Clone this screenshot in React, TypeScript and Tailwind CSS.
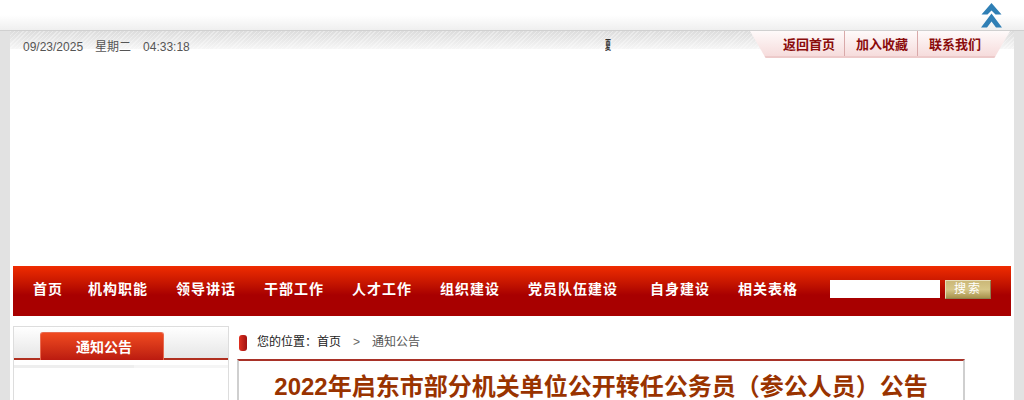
export default function App() {
  const cjk = { fontFamily: '"Liberation Sans","Noto Sans CJK SC",sans-serif' };
  const nav = [
    ["首页", "mr-[25px]"],
    ["机构职能", "mr-[28px]"],
    ["领导讲话", "mr-[28px]"],
    ["干部工作", "mr-[28px]"],
    ["人才工作", "mr-[28px]"],
    ["组织建设", "mr-[28px]"],
    ["党员队伍建设", "mr-[32px]"],
    ["自身建设", "mr-[28px]"],
    ["相关表格", "mr-[32px]"],
  ];
  return (
    <div style={cjk} className="relative h-[400px] w-[1024px] overflow-hidden bg-[#e2e2e2]">
      <div className="h-[31px] border-b border-[#d0d0d0] bg-gradient-to-b from-white from-[50%] to-[#efefef]" />
      <svg className="absolute left-[980px] top-[3px]" width="23" height="25" viewBox="0 0 23 25">
        <path d="M11.5 0 L21.5 11.5 L15.5 11.5 L11.5 7.5 L7.5 11.5 L1.5 11.5 Z" fill="#2f7fb5" />
        <path d="M11.5 10.5 L22 24.5 L16 24.5 L11.5 18.5 L7 24.5 L1 24.5 Z" fill="#2f7fb5" />
      </svg>
      <div className="mx-[10px] h-[369px] bg-white">
        <div className="flex h-[235px] items-start bg-[repeating-linear-gradient(135deg,rgba(255,255,255,0.35)_0px,rgba(255,255,255,0.35)_1px,transparent_1px,transparent_3px),linear-gradient(#dcdcdc,#f6f6f6)] bg-[length:100%_18px] bg-no-repeat">
          <div className="flex h-[18px] items-center pt-[13px] pl-[13px] text-[12px] leading-[14px] text-[#555555]">
            <span className="mr-[12px]">09/23/2025</span>
            <span className="mr-[12px]">星期二</span>
            <span>04:33:18</span>
          </div>
          <div className="mt-[8px] ml-[415px] h-[14px] w-[6px] text-[12px] leading-[14px] font-bold text-[#333333]">
            <span className="block w-[12px] origin-left scale-x-50">夏</span>
          </div>
          <div className="mr-[4px] ml-auto flex h-[27px] w-[260px] items-center border-b-2 border-[#edcaca] bg-gradient-to-b from-[#fefafa] to-[#f6dcdc] pt-[2px] pl-[33px] text-[13px] font-bold text-[#8a0c0c] [clip-path:polygon(0_0,100%_0,94%_100%,6%_100%)]">
            <span className="w-[61px] whitespace-nowrap">返回首页</span>
            <span className="-mt-[2px] h-[25px] w-px bg-[#d9a9a9]" />
            <span className="ml-[11px] w-[61px] whitespace-nowrap">加入收藏</span>
            <span className="-mt-[2px] h-[25px] w-px bg-[#d9a9a9]" />
            <span className="ml-[11px] whitespace-nowrap">联系我们</span>
          </div>
        </div>
        <div className="mx-[3px] flex h-[50px] items-center bg-gradient-to-b from-[#f02c00] to-[#a80000] to-[58%] pb-[4px] pl-[20px] text-[14px] font-bold tracking-[1px] text-white">
          {nav.map(([t, c]) => (
            <span key={t} className={`whitespace-nowrap ${c}`}>{t}</span>
          ))}
          <div className="h-[18px] w-[110px] bg-white" />
          <div className="ml-[5px] flex h-[19px] w-[46px] items-center justify-center border border-t-[#e6dcb8] border-r-[#8f7f50] border-b-[#8f7f50] border-l-[#e6dcb8] bg-gradient-to-b from-[#cbb878] via-[#d6c688] to-[#a8924c] text-[12px] font-normal tracking-[2px] text-white">
            搜索
          </div>
        </div>
        <div className="flex px-[3px] pt-[10px]">
          <div className="w-[216px] shrink-0 border border-[#dddddd]">
            <div className="h-[33px] border-b-2 border-[#b03020] bg-gradient-to-b from-white to-[#e6e6e6] pt-[5px] pl-[26px]">
              <div className="flex h-[28px] w-[124px] items-center justify-center rounded-t-[3px] border border-b-0 border-[#e86a50] bg-gradient-to-b from-[#f04a20] to-[#bb1a10] pt-[1px] pl-[4px] text-[14px] font-bold text-white">
                通知公告
              </div>
            </div>
            <div className="mt-[5px] h-[3px] bg-[#f5f5f5]">
              <div className="h-[3px] w-[120px] bg-[#eeeeee]" />
            </div>
          </div>
          <div className="ml-[8px] w-[728px] shrink-0">
            <div className="flex h-[33px] items-center pb-[1px] pl-[2px] text-[12px]">
              <div className="mt-[1px] h-[16px] w-[8px] rounded-[3px] bg-gradient-to-r from-[#e03020] to-[#a01010]" />
              <span className="ml-[10px] whitespace-nowrap text-[#222222]">您的位置：首页</span>
              <span className="ml-[12px] text-[#666666]">&gt;</span>
              <span className="ml-[12px] text-[#555555]">通知公告</span>
            </div>
            <div className="border-x-2 border-t-2 border-x-[#cfcfcf] border-t-[#a83228] pt-[12px] text-center text-[24px] leading-[28px] font-bold whitespace-nowrap text-[#993300]">
              2022年启东市部分机关单位公开转任公务员（参公人员）公告
            </div>
          </div>
        </div>
      </div>
    </div>
  );
}
